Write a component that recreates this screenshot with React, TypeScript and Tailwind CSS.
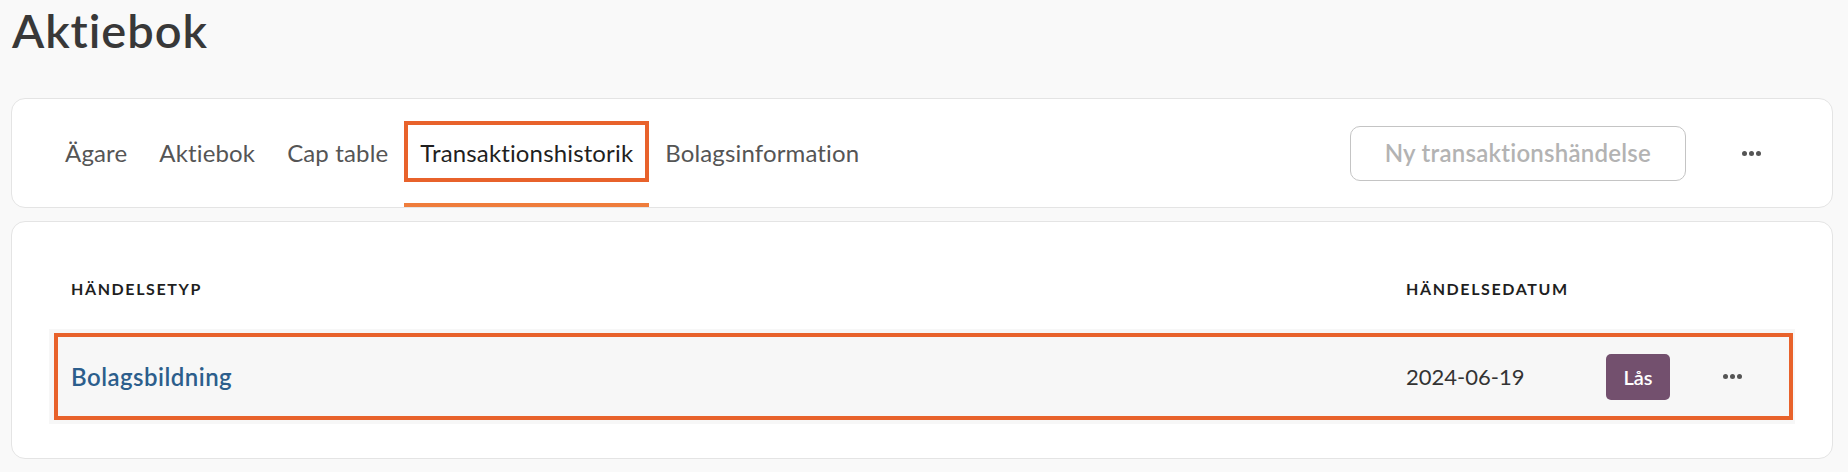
import React from 'react';

const tabs = ['Ägare', 'Aktiebok', 'Cap table', 'Transaktionshistorik', 'Bolagsinformation'];

const Dots = () => (
  <div className="flex items-center gap-[2px]">
    <span className="w-[5px] h-[5px] rounded-full bg-[#555]" />
    <span className="w-[5px] h-[5px] rounded-full bg-[#555]" />
    <span className="w-[5px] h-[5px] rounded-full bg-[#555]" />
  </div>
);

export default function App() {
  const active = 'Transaktionshistorik';

  return (
    <div className="min-h-screen bg-[#f9f9f9] font-['Lato',sans-serif] pl-[11px] pr-[15px]">
      <h1 className="pl-[1px] pt-[2px] text-[47px] leading-[1.2] font-semibold tracking-[0.02em] text-[#383838]">Aktiebok</h1>

      <div className="mt-[40px] h-[110px] rounded-[14px] border border-[#e4e4e4] bg-white flex items-stretch pl-[37px] pr-[71px]">
        {tabs.map((tab) => (
          <div
            key={tab}
            className={`relative flex items-center px-[16px] pt-[4px] border-b-4 text-[24px] tracking-[0.006em] ${
              tab === active ? 'border-[#ef7d3c] text-[#1f1f1f]' : 'border-transparent text-[#555]'
            }`}
          >
            {tab}
            {tab === active && (
              <div className="absolute left-0 right-0 top-[22px] h-[61px] border-4 border-[#e8622b]" />
            )}
          </div>
        ))}
        <div className="ml-auto flex items-center gap-[56px]">
          <button className="h-[55px] px-[34px] rounded-[10px] border border-[#c4c4c4] text-[24px] font-semibold tracking-[0.01em] text-[#b3b3b3]">
            Ny transaktionshändelse
          </button>
          <Dots />
        </div>
      </div>

      <div className="mt-[13px] rounded-[14px] border border-[#e4e4e4] bg-white px-[37px] pt-[37px] pb-[34px]">
        <div className="h-[60px] flex items-center pl-[22px] pr-[53px] text-[16px] font-bold tracking-[0.1em] text-[#1f1f1f]">
          <div className="flex-1">HÄNDELSETYP</div>
          <div className="w-[200px]">HÄNDELSEDATUM</div>
          <div className="w-[136px]" />
        </div>
        <div className="relative mt-[10px] h-[95px] bg-[#f7f7f7] flex items-center pl-[22px] pr-[53px]">
          <div className="flex-1 text-[24px] font-semibold tracking-[0.02em] text-[#2c5e8c]">Bolagsbildning</div>
          <div className="w-[200px] text-[22px] text-[#333]">2024-06-19</div>
          <button className="w-[64px] h-[46px] rounded-[5px] bg-[#73506e] text-[20px] font-semibold text-white">Lås</button>
          <div className="ml-[53px]">
            <Dots />
          </div>
          <div className="absolute left-[5px] right-[2px] top-[4px] bottom-[4px] border-4 border-[#e8622b]" />
        </div>
      </div>
    </div>
  );
}
